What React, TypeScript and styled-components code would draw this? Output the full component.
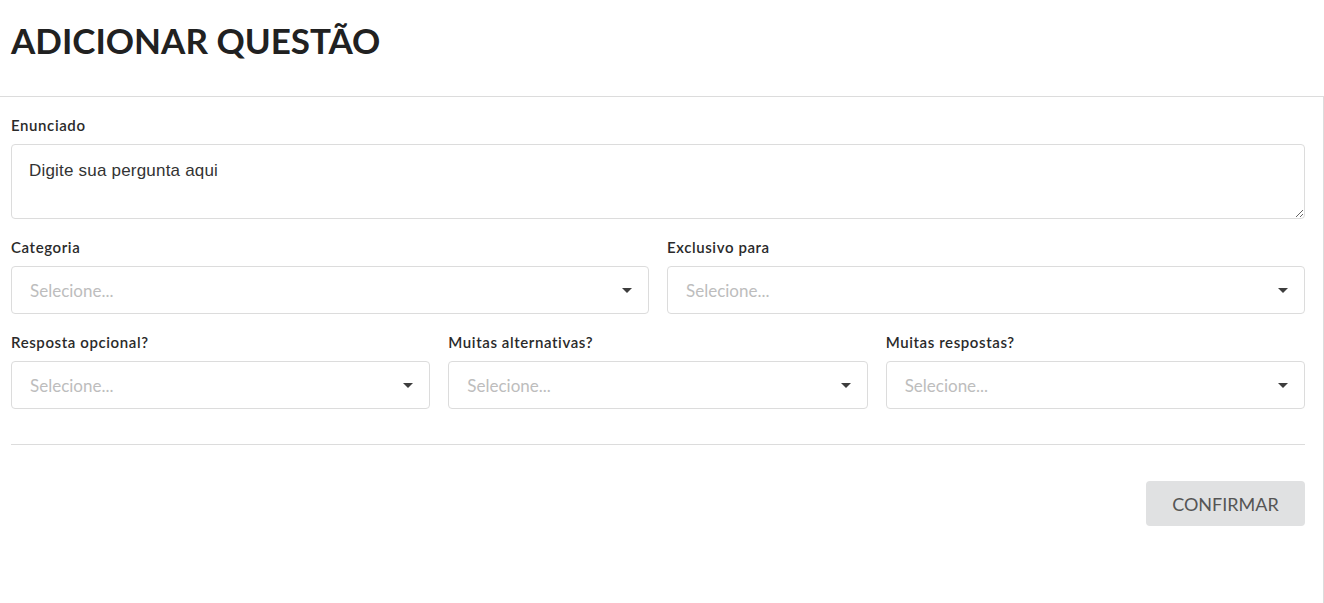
import React from 'react';
import styled, { createGlobalStyle } from 'styled-components';

const GlobalStyle = createGlobalStyle`
  html, body {
    margin: 0;
    padding: 0;
    background: #fff;
    font-family: Lato, "Liberation Sans", sans-serif;
    color: #222;
  }
`;

type FieldProps = {
  label: string;
};

function Caret() {
  return (
    <svg width="10" height="5" viewBox="0 0 10 5">
      <path d="M0 0 L10 0 L5 5 Z" fill="#3d3d3d" />
    </svg>
  );
}

function SelectField({ label }: FieldProps) {
  return (
    <Field>
      <Label>{label}</Label>
      <SelectBox>
        <Placeholder>Selecione...</Placeholder>
        <Caret />
      </SelectBox>
    </Field>
  );
}

export default function App() {
  return (
    <>
      <GlobalStyle />
      <Modal>
        <Header>
          <Title>ADICIONAR QUESTÃO</Title>
        </Header>
        <Body>
          <Field>
            <Label>Enunciado</Label>
            <TextArea placeholder="Digite sua pergunta aqui" />
          </Field>
          <Row cols={2}>
            <SelectField label="Categoria" />
            <SelectField label="Exclusivo para" />
          </Row>
          <Row cols={3}>
            <SelectField label="Resposta opcional?" />
            <SelectField label="Muitas alternativas?" />
            <SelectField label="Muitas respostas?" />
          </Row>
          <Divider />
          <Actions>
            <ConfirmButton>CONFIRMAR</ConfirmButton>
          </Actions>
        </Body>
      </Modal>
    </>
  );
}

const Modal = styled.div`
  width: 1324px;
  height: 603px;
  background: #fff;
`;

const Header = styled.div`
  height: 97px;
  padding: 0 11px;
  box-sizing: border-box;
  border-bottom: 1px solid #dcdcdc;
  display: flex;
  align-items: center;
`;

const Title = styled.h1`
  margin: 0 0 17px;
  font-family: Lato, sans-serif;
  font-weight: 700;
  font-size: 35px;
  color: #212121;
`;

const Body = styled.div`
  padding: 20px 18px 0 11px;
  border-right: 1px solid #dcdcdc;
  height: 506px;
  box-sizing: border-box;
  display: flex;
  flex-direction: column;
`;

const Field = styled.div`
  display: flex;
  flex-direction: column;
  min-width: 0;
`;

const Label = styled.label`
  font-family: Lato, sans-serif;
  font-weight: 600;
  font-size: 15px;
  letter-spacing: 0.6px;
  line-height: 17px;
  color: #2a2a2a;
  margin-bottom: 10px;
`;

const TextArea = styled.textarea`
  height: 75px;
  box-sizing: border-box;
  border: 1px solid #dcdcdc;
  border-radius: 4px;
  padding: 16px 17px;
  font-family: Arial, "Liberation Sans", sans-serif;
  font-size: 17px;
  letter-spacing: 0.2px;
  resize: vertical;
  outline: none;
  margin-bottom: 20px;
  &::placeholder {
    color: #333;
  }
`;

const Row = styled.div<{ cols: number }>`
  display: grid;
  grid-template-columns: repeat(${({ cols }) => cols}, 1fr);
  column-gap: 18px;
  margin-bottom: 20px;
`;

const SelectBox = styled.div`
  height: 48px;
  box-sizing: border-box;
  border: 1px solid #dcdcdc;
  border-radius: 4px;
  padding: 0 16px 0 18px;
  display: flex;
  align-items: center;
  justify-content: space-between;
`;

const Placeholder = styled.span`
  font-family: Lato, sans-serif;
  font-size: 17px;
  color: #bdbdbd;
`;

const Divider = styled.hr`
  border: 0;
  border-top: 1px solid #dcdcdc;
  margin: 15px 0 36px;
`;

const Actions = styled.div`
  display: flex;
  justify-content: flex-end;
`;

const ConfirmButton = styled.button`
  width: 159px;
  height: 45px;
  border: 0;
  border-radius: 4px;
  background: #e0e1e2;
  color: #555;
  font-family: Lato, sans-serif;
  font-size: 18px;
  cursor: pointer;
`;
